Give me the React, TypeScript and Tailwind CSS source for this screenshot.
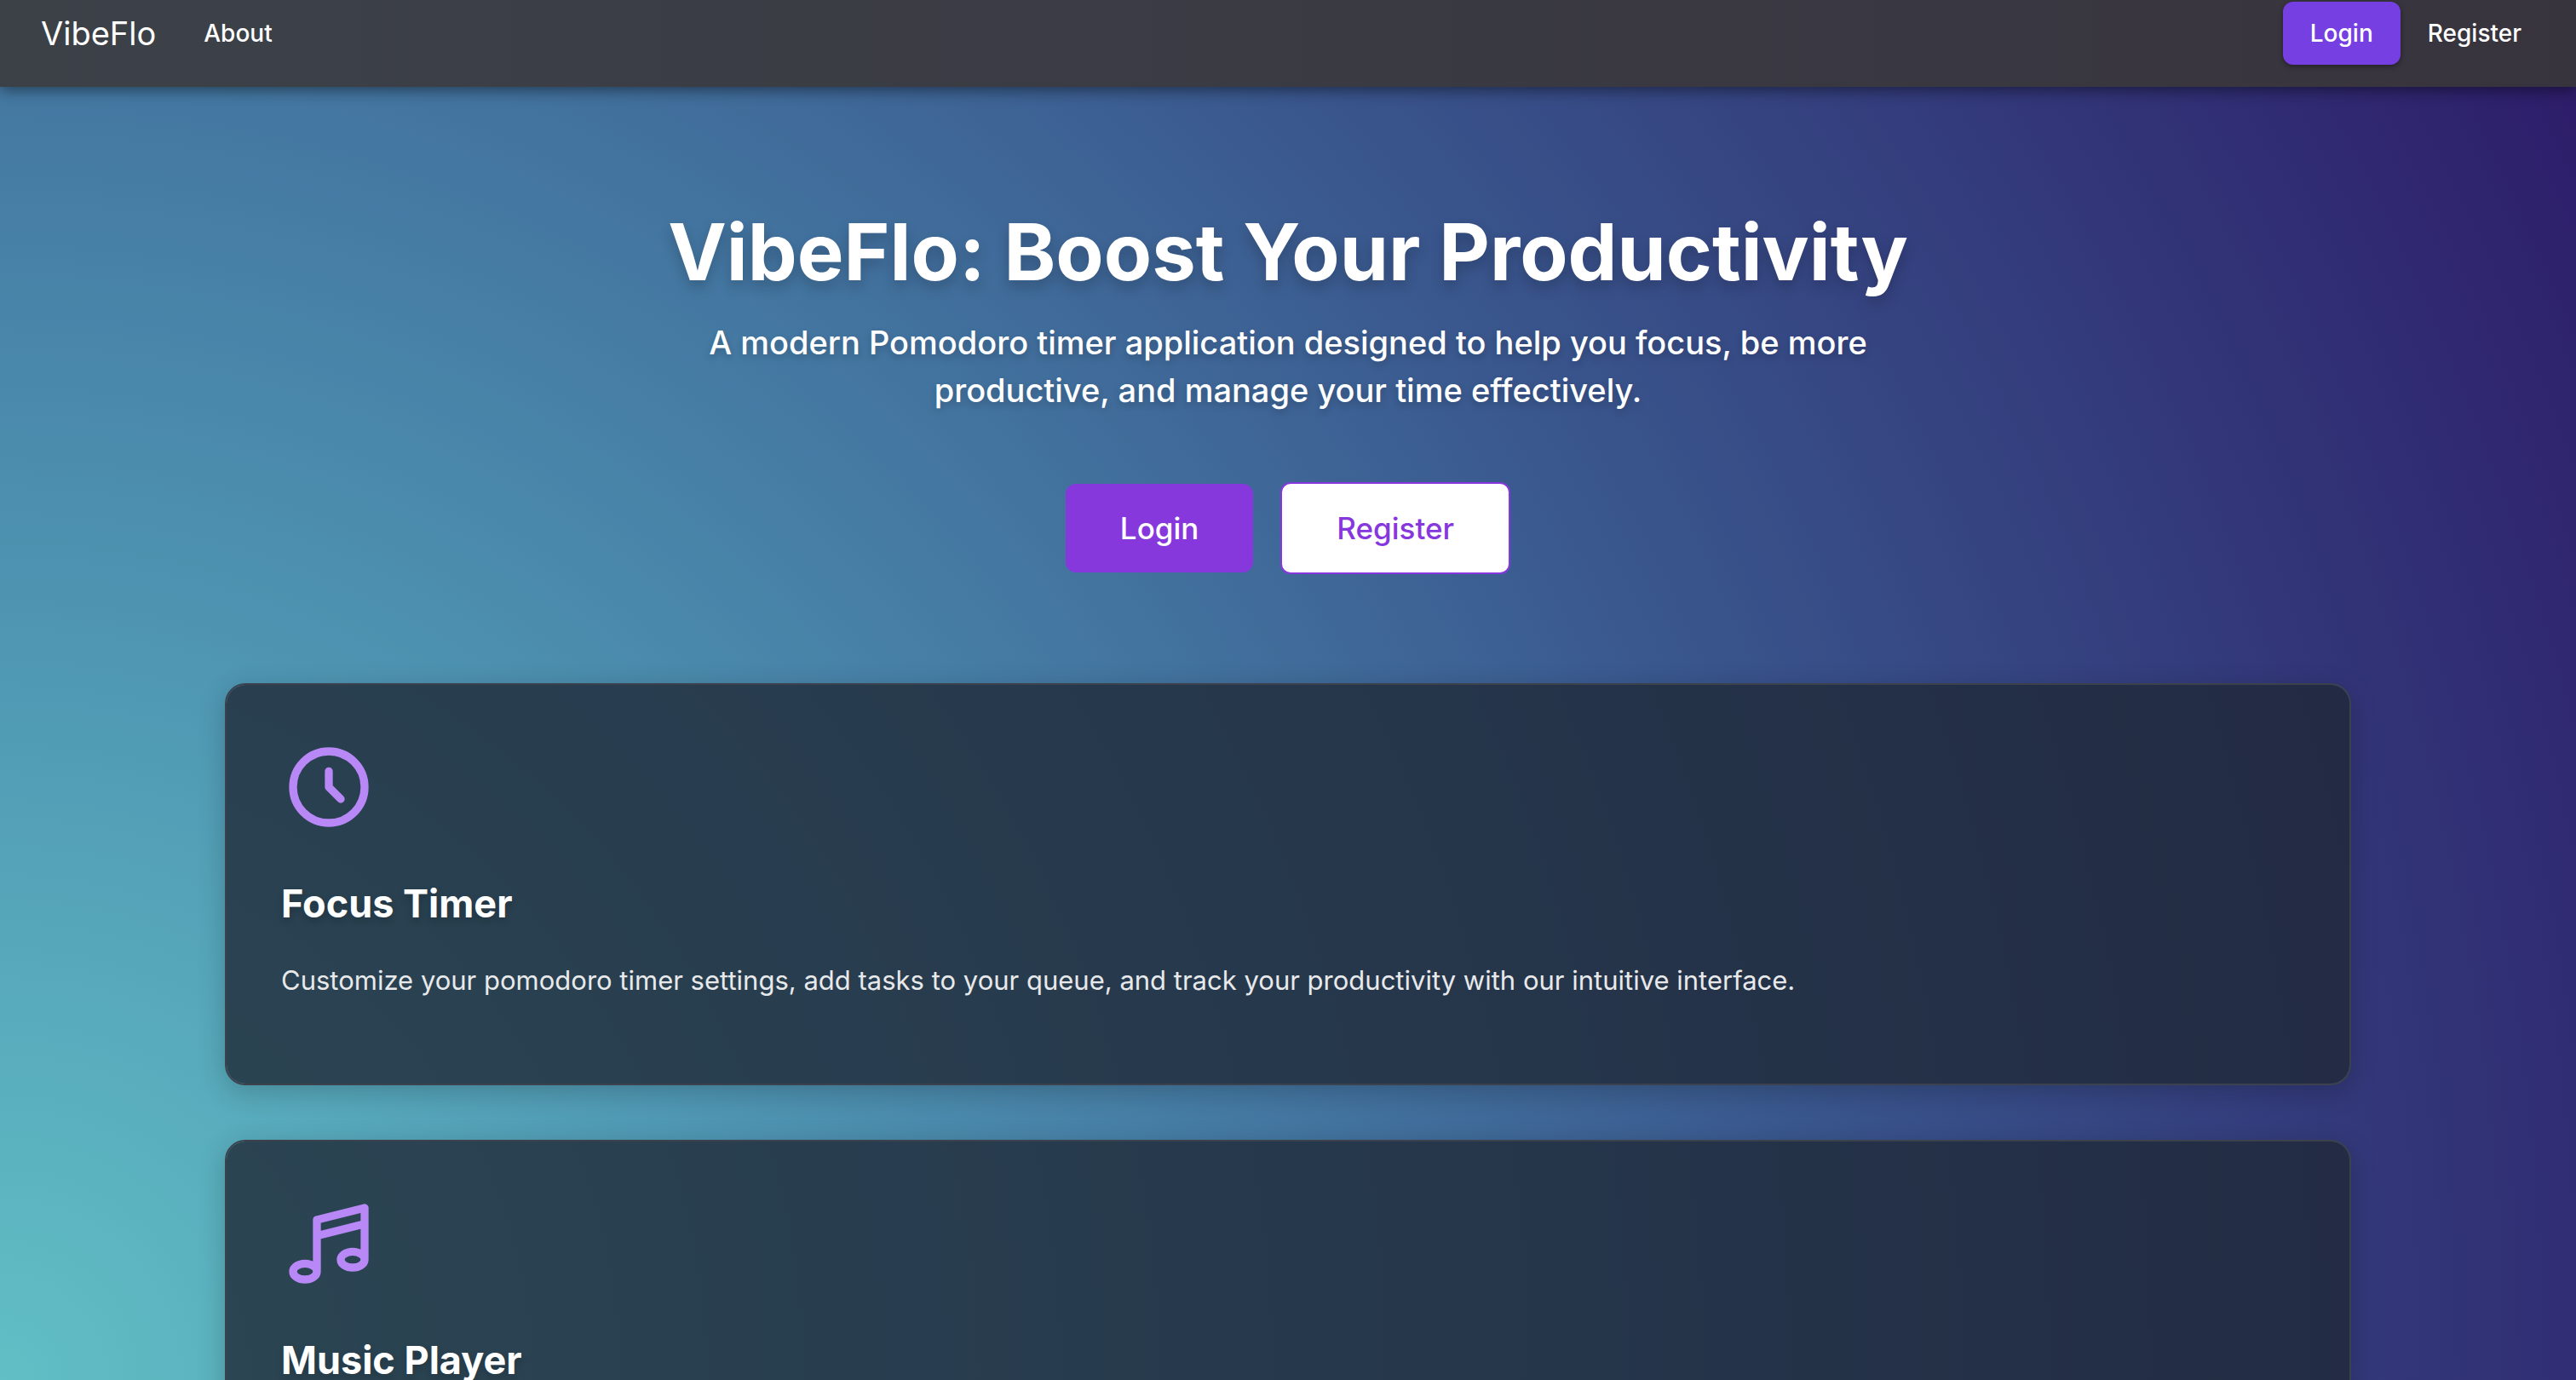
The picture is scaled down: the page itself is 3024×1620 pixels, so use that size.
import React from "react";

const clockPaths = ["M12 8v4l3 3m6-3a9 9 0 11-18 0 9 9 0 0118 0z"];
const musicPaths = [
  "M9 19V6l12-3v13M9 19c0 1.105-1.343 2-3 2s-3-.895-3-2 1.343-2 3-2 3 .895 3 2zm12-3c0 1.105-1.343 2-3 2s-3-.895-3-2 1.343-2 3-2 3 .895 3 2zM9 10l12-3",
];

const features = [
  {
    title: "Focus Timer",
    text: "Customize your pomodoro timer settings, add tasks to your queue, and track your productivity with our intuitive interface.",
    paths: clockPaths,
  },
  {
    title: "Music Player",
    text: "",
    paths: musicPaths,
  },
];

function FeatureCard({ title, text, paths }: { title: string; text: string; paths: string[] }) {
  return (
    <article className="rounded-3xl border-2 border-[#3b424e] bg-[#1f2937]/80 bg-clip-padding p-16 pb-24 shadow-[0_8px_32px_rgba(0,0,0,0.2)]">
      <svg
        className="size-28 text-[#b788f6]"
        viewBox="0 0 24 24"
        fill="none"
        stroke="currentColor"
        strokeWidth={2}
        strokeLinecap="round"
        strokeLinejoin="round"
        aria-hidden="true"
      >
        {paths.map((d) => (
          <path key={d} d={d} />
        ))}
      </svg>
      <h2 className="mt-12 text-[45px]/[66px] font-bold text-white [text-shadow:0_4px_8px_rgba(0,0,0,0.2)]">{title}</h2>
      {text && <p className="mt-8 text-[31px]/[50px] text-[#e8e9eb]">{text}</p>}
    </article>
  );
}

export default function App() {
  return (
    <div className="h-screen overflow-hidden bg-[radial-gradient(circle_at_bottom_left,#61bfc5_0%,#5099b4_24%,#4478a2_44%,#39558c_63%,#333a7b_80%,#2d1b69_100%)] font-['Inter',sans-serif]">
      <header className="relative flex h-[102px] items-start justify-between bg-linear-to-r from-[#3c4148] to-[#38343e] pt-[2px] pr-8 pl-12 text-white shadow-[0_4px_16px_rgba(0,0,0,0.45)]">
        <nav className="flex h-[74px] items-center gap-14">
          <a href="#home" className="text-[38px]/[48px]">VibeFlo</a>
          <a href="#about" className="text-[28px]/[40px] font-medium">About</a>
        </nav>
        <nav className="flex h-[74px] items-center">
          <a href="#login" className="flex h-full items-center rounded-xl bg-[#753fe2] px-8 text-[28px]/[40px] font-medium shadow-[0_2px_6px_rgba(0,0,0,0.4)]">Login</a>
          <a href="#register" className="px-8 text-[28px]/[40px] font-medium">Register</a>
        </nav>
      </header>
      <main>
        <section className="flex flex-col items-center pt-36 pb-32 text-center text-white">
          <h1 className="text-[92px]/[100px] font-bold [text-shadow:0_8px_16px_rgba(0,0,0,0.2)]">VibeFlo: Boost Your Productivity</h1>
          <p className="mt-7 max-w-[1440px] text-[38px]/[56px] font-medium [text-shadow:0_4px_8px_rgba(0,0,0,0.2)]">
            A modern Pomodoro timer application designed to help you focus, be more productive, and manage your time effectively.
          </p>
          <div className="mt-20 flex items-center gap-8">
            <button type="button" className="rounded-xl bg-[#8638dd] px-16 py-6 text-[35px]/[56px] font-medium">Login</button>
            <button type="button" className="rounded-xl border-2 border-[#8638dd] bg-white px-16 py-6 text-[35px]/[56px] font-medium text-[#8638dd]">Register</button>
          </div>
        </section>
        <section className="mx-auto flex max-w-[2496px] flex-col gap-16">
          {features.map((feature) => (
            <FeatureCard key={feature.title} {...feature} />
          ))}
        </section>
      </main>
    </div>
  );
}
